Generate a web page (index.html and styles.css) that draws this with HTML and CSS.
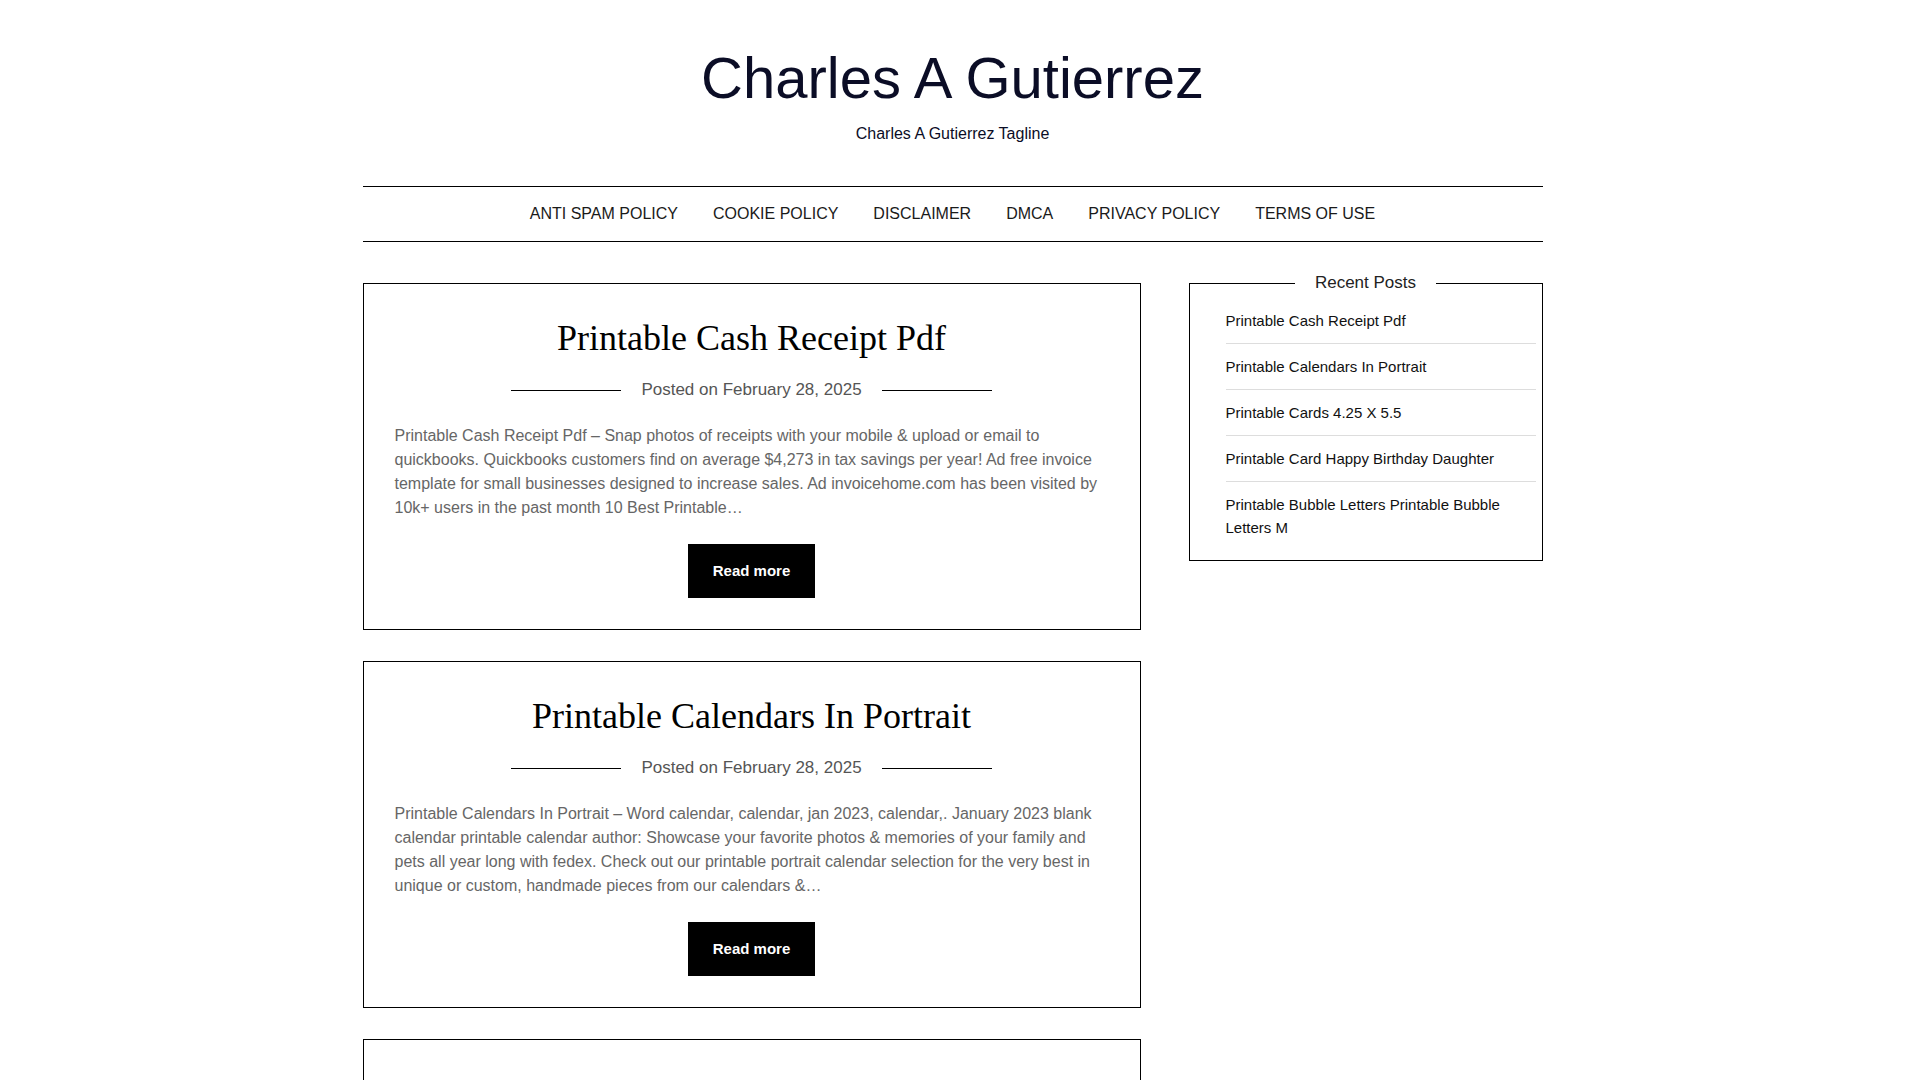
FILE: index.html
```html
<!DOCTYPE html>
<html lang="en">
<head>
<meta charset="utf-8">
<title>Charles A Gutierrez</title>
<link rel="stylesheet" href="styles.css">
</head>
<body>
<header class="site-header">
  <div class="branding">
    <h1 class="site-title"><a href="#">Charles A Gutierrez</a></h1>
    <p class="tagline">Charles A Gutierrez Tagline</p>
  </div>
  <nav class="main-nav container">
    <ul>
      <li><a href="#">Anti Spam Policy</a></li>
      <li><a href="#">Cookie Policy</a></li>
      <li><a href="#">Disclaimer</a></li>
      <li><a href="#">DMCA</a></li>
      <li><a href="#">Privacy Policy</a></li>
      <li><a href="#">Terms Of Use</a></li>
    </ul>
  </nav>
</header>

<div class="container content">
  <main class="posts">
    <article class="card">
      <h2 class="card-title"><a href="#">Printable Cash Receipt Pdf</a></h2>
      <div class="meta"><span>Posted on <a href="#">February 28, 2025</a></span></div>
      <p class="excerpt">Printable Cash Receipt Pdf – Snap photos of receipts with your mobile &amp; upload or email to quickbooks. Quickbooks customers find on average $4,273 in tax savings per year! Ad free invoice template for small businesses designed to increase sales. Ad invoicehome.com has been visited by 10k+ users in the past month 10 Best Printable…</p>
      <a class="read-more" href="#">Read more</a>
    </article>

    <article class="card">
      <h2 class="card-title"><a href="#">Printable Calendars In Portrait</a></h2>
      <div class="meta"><span>Posted on <a href="#">February 28, 2025</a></span></div>
      <p class="excerpt">Printable Calendars In Portrait – Word calendar, calendar, jan 2023, calendar,. January 2023 blank calendar printable calendar author: Showcase your favorite photos &amp; memories of your family and pets all year long with fedex. Check out our printable portrait calendar selection for the very best in unique or custom, handmade pieces from our calendars &amp;…</p>
      <a class="read-more" href="#">Read more</a>
    </article>

    <article class="card">
      <h2 class="card-title"><a href="#">Printable Cards 4.25 X 5.5</a></h2>
      <div class="meta"><span>Posted on <a href="#">February 28, 2025</a></span></div>
      <p class="excerpt">Printable Cards 4.25 X 5.5 – Choose from hundreds of free printable card templates in the 4.25 x 5.5 size. Print them at home on standard letter paper, fold them in half and add your own personal message for birthdays, holidays, thank you notes and every special occasion in between…</p>
      <a class="read-more" href="#">Read more</a>
    </article>

    <article class="card">
      <h2 class="card-title"><a href="#">Printable Card Happy Birthday Daughter</a></h2>
      <div class="meta"><span>Posted on <a href="#">February 27, 2025</a></span></div>
      <p class="excerpt">Printable Card Happy Birthday Daughter – Celebrate your daughter with a heartfelt card you can print at home. Pick a design, personalize the greeting and print it in minutes. Free birthday card templates for daughters of every age with sweet, funny and sentimental messages…</p>
      <a class="read-more" href="#">Read more</a>
    </article>

    <article class="card">
      <h2 class="card-title"><a href="#">Printable Bubble Letters Printable Bubble Letters M</a></h2>
      <div class="meta"><span>Posted on <a href="#">February 27, 2025</a></span></div>
      <p class="excerpt">Printable Bubble Letters Printable Bubble Letters M – Download free bubble letter templates for every letter of the alphabet. Great for posters, classroom displays, scrapbooks and coloring pages. Simply print, color and cut out the letters you need for your next project…</p>
      <a class="read-more" href="#">Read more</a>
    </article>

    <article class="card">
      <h2 class="card-title"><a href="#">Printable Brown Paper Bag</a></h2>
      <div class="meta"><span>Posted on <a href="#">February 26, 2025</a></span></div>
      <p class="excerpt">Printable Brown Paper Bag – Make your own gift bags with these free printable templates. Print on kraft paper, fold along the lines and glue the edges for a simple rustic bag that is perfect for party favors, lunches and small presents…</p>
      <a class="read-more" href="#">Read more</a>
    </article>

    <article class="card">
      <h2 class="card-title"><a href="#">Printable Brain Teasers For Adults</a></h2>
      <div class="meta"><span>Posted on <a href="#">February 26, 2025</a></span></div>
      <p class="excerpt">Printable Brain Teasers For Adults – Keep your mind sharp with free printable puzzles, riddles and logic games. These worksheets are great for seniors, office breaks and family game nights, with answer keys included for every page…</p>
      <a class="read-more" href="#">Read more</a>
    </article>

    <article class="card">
      <h2 class="card-title"><a href="#">Printable Bug Pictures</a></h2>
      <div class="meta"><span>Posted on <a href="#">February 25, 2025</a></span></div>
      <p class="excerpt">Printable Bug Pictures – Free insect pictures and coloring pages for kids. Butterflies, ladybugs, bees and beetles in simple outlines that are easy to color, perfect for science lessons, nature journals and rainy day activities…</p>
      <a class="read-more" href="#">Read more</a>
    </article>

    <article class="card">
      <h2 class="card-title"><a href="#">Printable Bubble Letter T</a></h2>
      <div class="meta"><span>Posted on <a href="#">February 25, 2025</a></span></div>
      <p class="excerpt">Printable Bubble Letter T – A large, rounded letter T template ready to print and color. Use it for name banners, bulletin boards and alphabet practice with young learners who are just starting to recognize their letters…</p>
      <a class="read-more" href="#">Read more</a>
    </article>

    <article class="card">
      <h2 class="card-title"><a href="#">Printable Business Card Template</a></h2>
      <div class="meta"><span>Posted on <a href="#">February 24, 2025</a></span></div>
      <p class="excerpt">Printable Business Card Template – Design professional business cards in minutes with free templates you can print at home. Add your name, title and contact details, then print on card stock and trim along the guides…</p>
      <a class="read-more" href="#">Read more</a>
    </article>
  </main>

  <aside class="sidebar">
    <section class="widget">
      <h2 class="widget-title"><span>Recent Posts</span></h2>
      <ul>
        <li><a href="#">Printable Cash Receipt Pdf</a></li>
        <li><a href="#">Printable Calendars In Portrait</a></li>
        <li><a href="#">Printable Cards 4.25 X 5.5</a></li>
        <li><a href="#">Printable Card Happy Birthday Daughter</a></li>
        <li><a href="#">Printable Bubble Letters Printable Bubble Letters M</a></li>
      </ul>
    </section>
  </aside>
</div>

<footer class="site-footer container">
  <p>Copyright © 2025 Charles A Gutierrez. All rights reserved.</p>
</footer>
</body>
</html>
```

FILE: styles.css
```css
html, body {
  margin: 0;
  padding: 0;
}

body {
  padding-right: 15px;
  font-family: "Liberation Sans", Arial, sans-serif;
  color: #111;
  background: #fff;
}

a {
  color: inherit;
  text-decoration: none;
}

.container {
  width: 1180px;
  margin-left: auto;
  margin-right: auto;
}

/* Header */
.branding {
  text-align: center;
  padding-top: 44px;
}

.site-title {
  margin: 0;
  font-size: 58px;
  line-height: 68px;
  font-weight: 400;
  color: #0b0d26;
}

.tagline {
  margin: 10px 0 0;
  font-size: 16px;
  line-height: 24px;
  color: #0b0d26;
}

.main-nav {
  margin-top: 40px;
  border-top: 1px solid #000;
  border-bottom: 1px solid #000;
}

.main-nav ul {
  display: flex;
  justify-content: center;
  align-items: center;
  gap: 35px;
  height: 54px;
  margin: 0;
  padding: 0;
  list-style: none;
}

.main-nav a {
  font-size: 16px;
  text-transform: uppercase;
  color: #1a1a1a;
}

/* Content layout */
.content {
  display: flex;
  justify-content: space-between;
  align-items: flex-start;
  margin-top: 41px;
}

.posts {
  width: 778px;
}

.card {
  display: flex;
  flex-direction: column;
  align-items: center;
  border: 1px solid #000;
  padding: 31px 31px 31px;
  margin-bottom: 31px;
}

.card-title {
  margin: 0;
  font-family: "Liberation Serif", "Times New Roman", serif;
  font-size: 36px;
  line-height: 46px;
  font-weight: 400;
  color: #000;
  text-align: center;
}

.meta {
  display: flex;
  align-items: center;
  gap: 20px;
  margin-top: 17px;
  font-size: 17px;
  line-height: 24px;
  color: #555;
}

.meta::before,
.meta::after {
  content: "";
  width: 110px;
  height: 1px;
  background: #000;
}

.excerpt {
  align-self: stretch;
  margin: 22px 0 0;
  font-size: 16px;
  line-height: 24px;
  color: #666;
}

.read-more {
  margin-top: 24px;
  padding: 18px 25px;
  background: #000;
  color: #fff;
  font-size: 15px;
  line-height: 18px;
  font-weight: 700;
}

/* Sidebar */
.sidebar {
  width: 354px;
}

.widget {
  border: 1px solid #000;
  padding-bottom: 10px;
}

.widget-title {
  margin: -13px 0 0;
  text-align: center;
  font-size: 17px;
  line-height: 24px;
  font-weight: 400;
  color: #222;
}

.widget-title span {
  background: #fff;
  padding: 0 20px;
}

.widget ul {
  list-style: none;
  margin: 0;
  padding: 3px 6px 0 36px;
}

.widget li {
  padding: 11px 0;
  font-size: 15px;
  line-height: 23px;
  border-bottom: 1px solid #ddd;
}

.widget li:last-child {
  border-bottom: none;
}

.widget a {
  color: #111;
}

/* Footer */
.site-footer {
  margin-top: 40px;
  padding: 30px 0 60px;
  border-top: 1px solid #000;
  text-align: center;
  font-size: 15px;
  color: #555;
}
```
